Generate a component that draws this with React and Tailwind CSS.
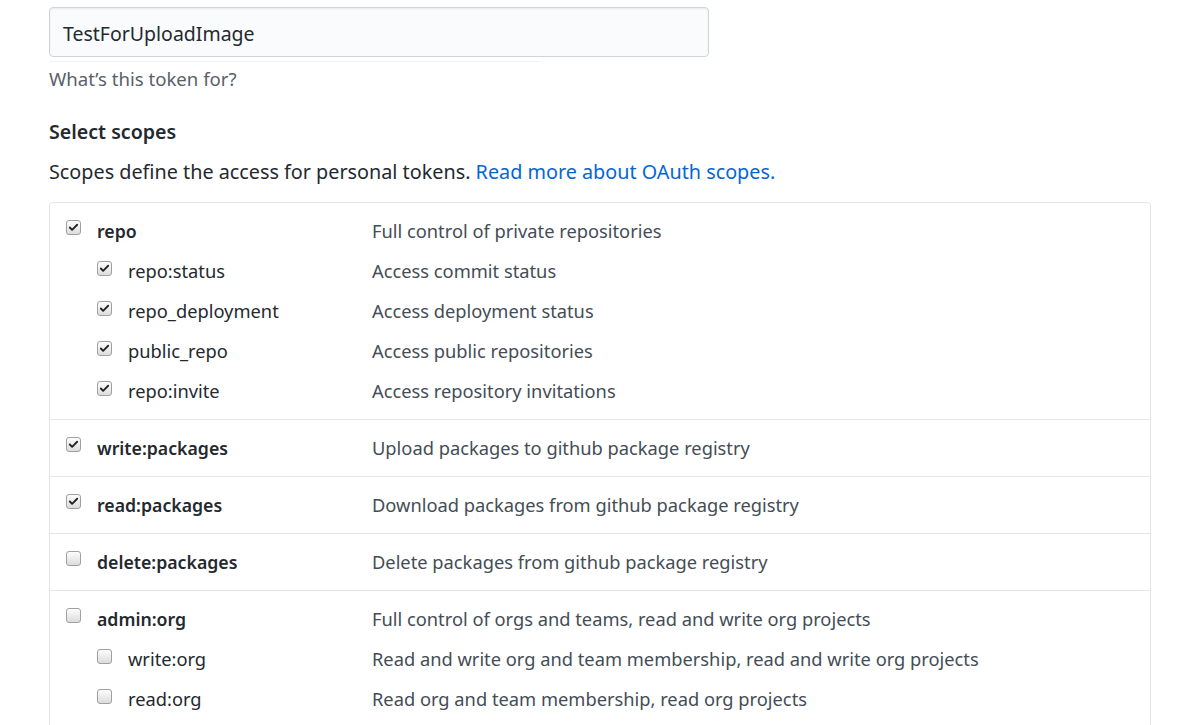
import { Check } from "lucide-react";

const groups = [
  [
    { name: "repo", desc: "Full control of private repositories", checked: true },
    { name: "repo:status", desc: "Access commit status", checked: true, child: true },
    { name: "repo_deployment", desc: "Access deployment status", checked: true, child: true },
    { name: "public_repo", desc: "Access public repositories", checked: true, child: true },
    { name: "repo:invite", desc: "Access repository invitations", checked: true, child: true },
  ],
  [{ name: "write:packages", desc: "Upload packages to github package registry", checked: true }],
  [{ name: "read:packages", desc: "Download packages from github package registry", checked: true }],
  [{ name: "delete:packages", desc: "Delete packages from github package registry", checked: false }],
  [
    { name: "admin:org", desc: "Full control of orgs and teams, read and write org projects", checked: false },
    { name: "write:org", desc: "Read and write org and team membership, read and write org projects", checked: false, child: true },
    { name: "read:org", desc: "Read org and team membership, read org projects", checked: false, child: true },
  ],
];

function Box({ checked }) {
  return (
    <span className="w-[15px] h-[15px] shrink-0 rounded-[3px] border border-[#a0a0a0] bg-gradient-to-b from-[#fdfdfd] to-[#dcdcdc] flex items-center justify-center">
      {checked && <Check size={11} strokeWidth={4} className="text-[#222]" />}
    </span>
  );
}

export default function App() {
  return (
    <div className="bg-white min-h-screen pl-[49px] pr-[32px] pt-[7px] text-[#24292e]" style={{ fontFamily: "'Noto Sans', sans-serif" }}>
      <div className="w-[660px] h-[50px] rounded-[4px] border border-[#d1d5da] bg-[#fafbfc] shadow-[inset_0_1px_2px_rgba(27,31,35,0.075)] flex items-center px-[13px] pt-[3px] text-[19.5px]">
        TestForUploadImage
      </div>
      <div className="w-[490px] h-px bg-[#eef3f8] mt-[4px]" />
      <p className="text-[#586069] text-[18.6px] mt-[4px] leading-[26px]">What’s this token for?</p>

      <h3 className="font-semibold text-[19.6px] mt-[26px] leading-[28px]">Select scopes</h3>
      <p className="text-[19.8px] mt-[12px] leading-[28px]">
        Scopes define the access for personal tokens.{" "}
        <a className="text-[#0366d6]">Read more about OAuth scopes.</a>
      </p>

      <div className="mt-[16px] border border-[#e1e4e8] rounded-[4px] text-[18.3px]">
        {groups.map((g, i) => (
          <div key={i} className={`pt-[8px] pb-[8px] ${i > 0 ? "border-t border-[#e1e4e8]" : ""}`}>
            {g.map((s) => (
              <div key={s.name} className="h-[40px] flex items-center">
                <div className={`w-[322px] flex items-center shrink-0 ${s.child ? "pl-[47px]" : "pl-[16px]"}`}>
                  <span className="-mt-[6px]"><Box checked={s.checked} /></span>
                  <span className={`ml-[16px] ${s.child ? "" : "font-semibold text-[17.7px]"}`}>{s.name}</span>
                </div>
                <span className="text-[#444d56]">{s.desc}</span>
              </div>
            ))}
          </div>
        ))}
      </div>
    </div>
  );
}
